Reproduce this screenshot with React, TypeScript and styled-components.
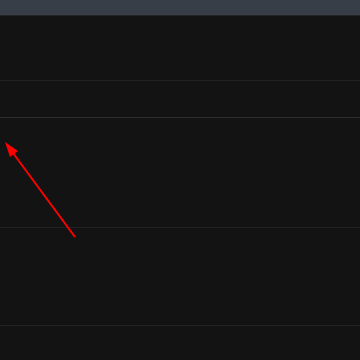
import React from "react";
import styled, { createGlobalStyle } from "styled-components";

const Global = createGlobalStyle`
  html, body { margin: 0; padding: 0; background: #131313; }
  body { width: 360px; height: 360px; overflow: hidden; font-family: "Liberation Sans", sans-serif; }
`;

const Page = styled.div`
  position: relative;
  width: 360px;
  height: 360px;
  background: #131313;
  display: flex;
  flex-direction: column;
`;

const TopBar = styled.div`
  height: 15px;
  background: #373e48;
  border-bottom: 1px solid #222426;
  flex: none;
`;

const Row = styled.div<{ $h: number; $line: string }>`
  height: ${(p) => p.$h}px;
  flex: none;
  border-bottom: 1px solid ${(p) => p.$line};
`;

const Arrow = styled.svg`
  position: absolute;
  left: 0;
  top: 0;
  pointer-events: none;
`;

export default function App() {
  return (
    <>
      <Global />
      <Page>
        <TopBar />
        <Row $h={64} $line="#212121" />
        <Row $h={36} $line="#2c2c2c" />
        <Row $h={109} $line="#222222" />
        <Row $h={97} $line="#232323" />
        <Row $h={33} $line="transparent" />
        <Arrow width="360" height="360" viewBox="0 0 360 360">
          <line x1="75" y1="237" x2="13" y2="153" stroke="#ff0000" strokeWidth="2" />
          <polygon points="5,142 18,151 10,157" fill="#ff0000" />
        </Arrow>
      </Page>
    </>
  );
}
